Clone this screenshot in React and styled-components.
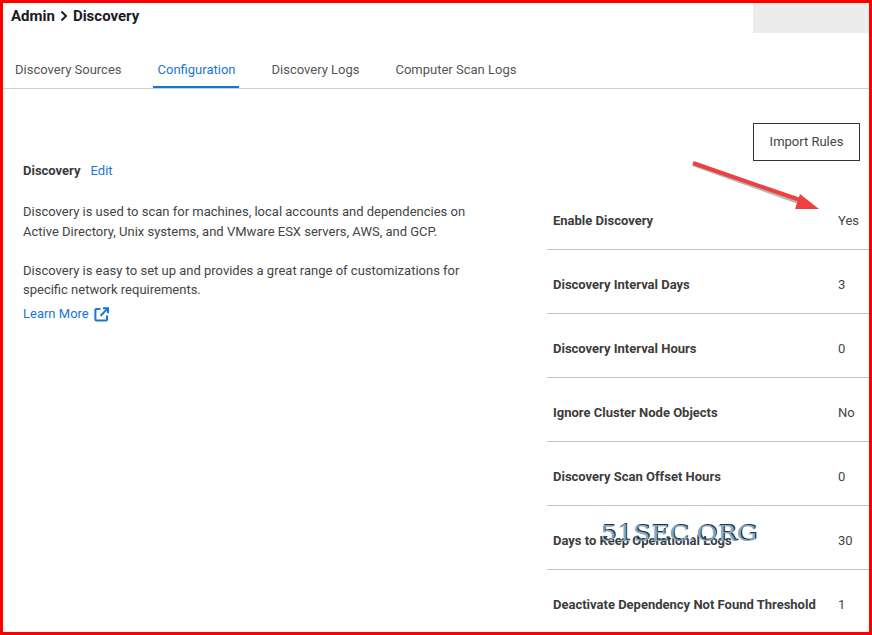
import React from "react";
import styled, { createGlobalStyle } from "styled-components";

const Global = createGlobalStyle`
  html, body { margin: 0; padding: 0; background: #fff; }
  body { font-family: Roboto, "Liberation Sans", sans-serif; }
`;

const Frame = styled.div`
  position: relative;
  box-sizing: border-box;
  width: 872px;
  height: 635px;
  border: 3px solid #ff0000;
  overflow: hidden;
  background: #fff;
`;

const Header = styled.header`
  display: flex;
  justify-content: space-between;
  align-items: flex-start;
  height: 30px;
`;

const Title = styled.h1`
  margin: 0;
  padding: 4px 0 0 8px;
  font-size: 15px;
  line-height: 18px;
  font-weight: 700;
  color: #1a1a24;
  display: flex;
  align-items: center;
  gap: 3px;
`;

const HeaderBox = styled.div`
  width: 116px;
  height: 30px;
  background: #ececec;
`;

const Tabs = styled.nav`
  display: flex;
  height: 55px;
  padding-left: 7px;
  gap: 28px;
  align-items: stretch;
  border-bottom: 1px solid #d0d0d0;
`;

const Tab = styled.a`
  box-sizing: border-box;
  padding: 22px 3px 0 5px;
  font-size: 13px;
  line-height: 30px;
  color: ${(p) => (p.$active ? "#1976d2" : "#555")};
  border-bottom: 2px solid ${(p) => (p.$active ? "#1976d2" : "transparent")};
`;

const Body = styled.main`
  display: flex;
  justify-content: space-between;
`;

const Left = styled.section`
  width: 460px;
  padding: 73px 0 0 20px;
`;

const SectionHead = styled.div`
  display: flex;
  gap: 10px;
  font-size: 13px;
  line-height: 18px;
  margin-bottom: 22px;
`;

const SectionTitle = styled.strong`
  color: #3a3a3a;
  font-weight: 700;
`;

const BlueLink = styled.a`
  color: #1976d2;
  display: inline-flex;
  align-items: center;
  gap: 5px;
  font-size: 13px;
  line-height: 18px;
`;

const Para = styled.p`
  margin: 0 0 19.5px;
  font-size: 13px;
  line-height: 19.5px;
  color: #444;
  &:last-of-type { margin-bottom: 3.5px; }
`;

const Right = styled.section`
  width: 322px;
  display: flex;
  flex-direction: column;
  padding-top: 34px;
`;

const Actions = styled.div`
  display: flex;
  justify-content: flex-end;
  padding-right: 9px;
  height: 63px;
`;

const OutlineButton = styled.button`
  box-sizing: border-box;
  width: 107px;
  height: 38px;
  background: #fff;
  border: 1px solid #333;
  font: 400 13px Roboto, sans-serif;
  color: #444;
  padding: 0 0 2px;
`;

const Row = styled.div`
  box-sizing: border-box;
  height: 64px;
  display: grid;
  grid-template-columns: 285px 1fr;
  align-items: center;
  padding: 6px 0 0 6px;
  border-bottom: 1px solid #c4c4c4;
  font-size: 13px;
  color: #444;
  &:last-child { border-bottom-color: transparent; }
`;

const RowLabel = styled.span`
  font-weight: 700;
  color: #3c3c3c;
  white-space: nowrap;
`;

const Arrow = styled.svg`
  position: absolute;
  left: 685px;
  top: 153px;
`;

const Watermark = styled.div`
  position: absolute;
  left: 597px;
  top: 518px;
  font: 400 22px "DejaVu Serif", serif;
  color: #7aaad0;
  text-shadow: 1px -1px 0 #333;
  white-space: nowrap;
  transform: scaleX(1.17);
  transform-origin: left center;
`;

const rows = [
  ["Enable Discovery", "Yes"],
  ["Discovery Interval Days", "3"],
  ["Discovery Interval Hours", "0"],
  ["Ignore Cluster Node Objects", "No"],
  ["Discovery Scan Offset Hours", "0"],
  ["Days to Keep Operational Logs", "30"],
  ["Deactivate Dependency Not Found Threshold", "1"],
];

export default function App() {
  return (
    <>
      <Global />
      <Frame>
        <Header>
          <Title>
            Admin
            <svg width="12" height="12" viewBox="0 0 12 12" fill="none" stroke="#1a1a24" strokeWidth="1.9">
              <path d="M3.5 1.5 8 6 3.5 10.5" />
            </svg>
            Discovery
          </Title>
          <HeaderBox />
        </Header>
        <Tabs>
          <Tab>Discovery Sources</Tab>
          <Tab $active>Configuration</Tab>
          <Tab>Discovery Logs</Tab>
          <Tab>Computer Scan Logs</Tab>
        </Tabs>
        <Body>
          <Left>
            <SectionHead>
              <SectionTitle>Discovery</SectionTitle>
              <BlueLink>Edit</BlueLink>
            </SectionHead>
            <Para>
              Discovery is used to scan for machines, local accounts and dependencies on
              <br />
              Active Directory, Unix systems, and VMware ESX servers, AWS, and GCP.
            </Para>
            <Para>
              Discovery is easy to set up and provides a great range of customizations for
              <br />
              specific network requirements.
            </Para>
            <BlueLink>
              Learn More
              <svg width="15" height="15" viewBox="0 0 15 15" fill="none" stroke="#1976d2" strokeWidth="2">
                <path d="M6.5 2H2.4a1 1 0 0 0-1 1v9.6a1 1 0 0 0 1 1H12a1 1 0 0 0 1-1V8.5" />
                <path d="M9 1.3h5v5M13.6 1.6 6.5 8.7" />
              </svg>
            </BlueLink>
          </Left>
          <Right>
            <Actions>
              <OutlineButton>Import Rules</OutlineButton>
            </Actions>
            {rows.map(([label, value]) => (
              <Row key={label}>
                <RowLabel>{label}</RowLabel>
                <span>{value}</span>
              </Row>
            ))}
          </Right>
        </Body>
        <Arrow width="140" height="60" viewBox="0 0 140 60">
          <path d="M5 8 L112 46.5" stroke="#b5b5b5" strokeWidth="4" />
          <path d="M5 7 L115 45" stroke="#ee4040" strokeWidth="4" />
          <path d="M112 38 L131 53 L107 53 Z" fill="#ee4040" />
        </Arrow>
        <Watermark>51SEC.ORG</Watermark>
      </Frame>
    </>
  );
}
